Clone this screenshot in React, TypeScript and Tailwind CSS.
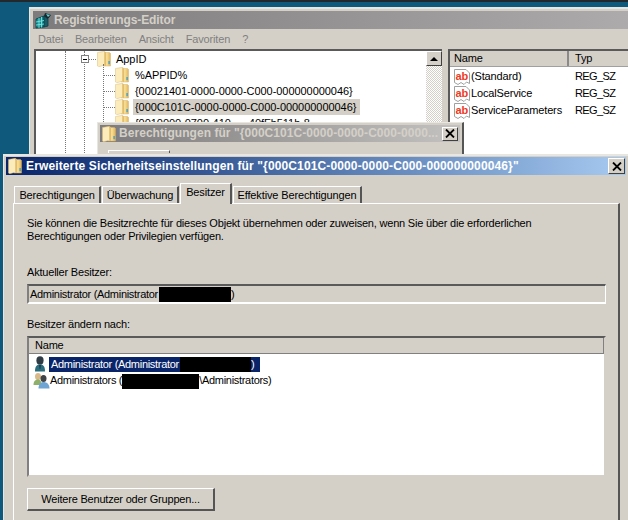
import React from "react";

const sans = "font-['Liberation_Sans',Arial,sans-serif]";
const titleFont = "font-['Liberation_Sans',Arial,sans-serif] font-bold text-[12px]";

function Folder({ className = "" }: { className?: string }) {
  return (
    <svg width="14" height="16" viewBox="0 0 14 16" className={"shrink-0 " + className}>
      <defs>
        <linearGradient id="fold" x1="0" y1="0" x2="1" y2="0">
          <stop offset="0" stopColor="#fbe7a8" />
          <stop offset="0.6" stopColor="#f5d88a" />
          <stop offset="1" stopColor="#dfb35c" />
        </linearGradient>
      </defs>
      <path d="M6 1.5 H12.5 L13.5 2.5 V15 H6 Z" fill="url(#fold)" stroke="#d8b36b" strokeWidth="0.5" />
      <path d="M0.5 1.5 L7.5 0.3 V14.2 L1.5 15.8 L0.5 15 Z" fill="#fcecbc" stroke="#dcbc78" strokeWidth="0.5" />
      <path d="M7.5 0.3 L9 1.2 V15 H7.5 Z" fill="#e4bd6c" />
      <rect x="11.4" y="10" width="1.4" height="3.2" fill="#3f9fc9" />
    </svg>
  );
}

function AbIcon() {
  return (
    <svg width="16" height="16" viewBox="0 0 16 16" className="shrink-0">
      <path
        d="M0.5 0.5 H12 L15.5 4 V14.5 L12.5 13 L10 15.5 L7 13.5 L4 15.5 L0.5 13.5 Z"
        fill="#fff"
        stroke="#a0a0a0"
        strokeWidth="1"
      />
      <text x="1.5" y="10.5" fontFamily="'Liberation Sans',sans-serif" fontWeight="700" fontSize="11" fill="#ee3a24">
        ab
      </text>
    </svg>
  );
}

function UserIcon() {
  return (
    <svg width="14" height="16" viewBox="0 0 14 16" className="shrink-0">
      <ellipse cx="7" cy="4.5" rx="3.6" ry="4.2" fill="#2f3c46" />
      <path d="M2 15.5 C2 10 4 8.5 7 8.5 C10 8.5 12 10 12 15.5 Z" fill="#2a6d7e" />
      <path d="M6 9 H8 L7.4 13 H6.6 Z" fill="#1d3c48" />
    </svg>
  );
}

function GroupIcon() {
  return (
    <svg width="17" height="17" viewBox="0 0 17 17" className="shrink-0">
      <ellipse cx="5" cy="4.5" rx="3" ry="3.6" fill="#d9b98a" />
      <path d="M0.5 13 C0.5 9 2.5 7.5 5 7.5 C7 7.5 8.5 9 8.5 13 Z" fill="#8fb06a" />
      <ellipse cx="10.5" cy="6.5" rx="3" ry="3.6" fill="#3f4448" />
      <path d="M5.5 16.5 C5.5 12 8 10 10.5 10 C13.5 10 16.5 12 16.5 16.5 Z" fill="#6fa5d2" />
    </svg>
  );
}

function RegIcon() {
  return (
    <svg width="17" height="17" viewBox="0 0 17 17" className="shrink-0">
      <path d="M1 7 L9 4 V15 L1 16 Z" fill="#0f8f93" stroke="#0a3c45" strokeWidth="0.8" />
      <path d="M9 4 L13 7 V14 L9 15 Z" fill="#1a5d68" stroke="#0a3c45" strokeWidth="0.8" />
      <path d="M1 10 L9 8.5 M1 13 L9 12 M4 6 V16 M6.5 5 V15.5" stroke="#7fe0dc" strokeWidth="0.9" />
      <path d="M10 1 L16 3 L13 7 L9 4 Z" fill="#15282e" />
      <path d="M11 2 L15 3 L13 5 Z" fill="#5fd5d3" />
    </svg>
  );
}

function CloseBtn({ className = "" }: { className?: string }) {
  return (
    <div
      className={
        "flex items-center justify-center bg-[#d4d0c8] border border-t-white border-l-white border-r-[#404040] border-b-[#404040] shrink-0 " +
        className
      }
    >
      <svg width="10" height="9" viewBox="0 0 10 9">
        <path d="M1 0.5 L9 8.5 M9 0.5 L1 8.5" stroke="#000" strokeWidth="1.8" />
      </svg>
    </div>
  );
}

function Tab({ label, active = false, w }: { label: string; active?: boolean; w: string }) {
  return (
    <div
      className={
        "flex items-center justify-center whitespace-nowrap bg-[#d4d0c8] border-t border-l border-r-2 border-t-white border-l-white border-r-[#555] " +
        w +
        (active ? " h-[21px] -mb-px z-10 relative pb-[3px] mr-px" : " h-[17px] mr-px")
      }
    >
      {label}
    </div>
  );
}

const treeRows = [
  { label: "%APPID%" },
  { label: "{00021401-0000-0000-C000-000000000046}" },
  { label: "{000C101C-0000-0000-C000-000000000046}", selected: true },
  { label: "{0010000-0700-410-----40fFb511b-8" },
];

const values = ["(Standard)", "LocalService", "ServiceParameters"];

function Redact({ w, className = "" }: { w: string; className?: string }) {
  return <span className={"inline-block h-[15px] bg-black align-middle " + w + " " + className} />;
}

export default function App() {
  return (
    <div className={"relative w-[628px] h-[520px] overflow-hidden bg-[#0f5a7c] text-[11px] tracking-[-0.2px] leading-[13px] text-black " + sans}>
      <div className="h-[2px] bg-[#22282b]" />

      {/* Registry editor */}
      <div className="absolute left-[29px] top-[7px] w-[640px] h-[200px] bg-[#d4d0c8] border-t-2 border-l border-[#e8e6e1] pl-[3px] pt-[2px] tracking-[-0.15px]">
        <div className="flex h-[18px] items-center bg-gradient-to-r from-[#7d7b7b] to-[#b0aeae] pl-[2px] gap-[2px]">
          <RegIcon />
          <span className={titleFont + " tracking-[-0.1px] text-[#d4d0c8]"}>Registrierungs-Editor</span>
        </div>
        <div className="flex h-[21px] items-center gap-[12px] pl-[5px] text-[#808080]">
          <span>Datei</span>
          <span>Bearbeiten</span>
          <span>Ansicht</span>
          <span>Favoriten</span>
          <span>?</span>
        </div>
        <div className="flex gap-[6px] pl-px">
          <div className="relative w-[408px] h-[130px] bg-white border-t-2 border-l-2 border-[#5a5a5a] shrink-0 -mt-px tracking-[-0.05px]">
            <span className="absolute left-[29px] top-0 h-full border-l border-dotted border-[#777]" />
            <span className="absolute left-[48px] top-0 h-full border-l border-dotted border-[#777]" />
            <span className="absolute left-[67px] top-[13px] h-full border-l border-dotted border-[#777]" />
            <div className="flex h-4 items-center pl-[45px]">
              <div className="flex h-[8px] w-[8px] items-center justify-center border border-[#808080] bg-white z-10">
                <span className="block h-px w-[4px] bg-black" />
              </div>
              <span className="w-[7px] border-t border-dotted border-[#777]" />
              <Folder className="ml-[1px]" />
              <span className="ml-[5px]">AppID</span>
            </div>
            {treeRows.map((r) => (
              <div key={r.label} className="flex h-4 items-center pl-[68px]">
                <span className="w-[11px] border-t border-dotted border-[#777]" />
                <Folder />
                <span
                  className={
                    "ml-[4px] pl-[2px] pr-[4px] h-4 flex items-center whitespace-nowrap " + (r.selected ? "bg-[#d4d0c8]" : "")
                  }
                >
                  {r.label}
                </span>
              </div>
            ))}
            <div className="absolute right-0 top-0 h-full w-[16px] bg-[repeating-conic-gradient(#d4d0c8_0_25%,#fff_0_50%)] bg-[length:2px_2px]">
              <div className="flex h-[15px] items-center justify-center bg-[#d4d0c8] border border-t-white border-l-white border-r-[#404040] border-b-[#404040]">
                <span className="block h-0 w-0 border-x-[4px] border-b-[4px] border-x-transparent border-b-black" />
              </div>
            </div>
          </div>
          <div className="w-[200px] h-[130px] bg-white border-t-2 border-l-2 border-[#5a5a5a] -mt-px">
            <div className="flex h-[16px] items-center bg-[#d4d0c8] border-b border-[#a0a0a0]">
              <span className="w-[119px] pl-[4px] border-r-2 border-[#8a8a8a] h-full flex items-center">Name</span>
              <span className="pl-[6px]">Typ</span>
            </div>
            <div className="flex flex-col pt-px">
              {values.map((v) => (
                <div key={v} className="flex h-[17px] items-center">
                  <div className="flex w-[119px] items-center pl-[4px] gap-px">
                    <AbIcon />
                    <span className="whitespace-nowrap">{v}</span>
                  </div>
                  <span className="pl-[6px] tracking-[-0.6px]">REG_SZ</span>
                </div>
              ))}
            </div>
          </div>
        </div>
      </div>

      {/* Permissions dialog */}
      <div className="absolute left-[97px] top-[122px] w-[367px] h-[60px] bg-[#d4d0c8] border-t border-l border-t-[#e8e6e1] border-l-[#e8e6e1] border-r-2 border-r-[#555] pl-[2px] pt-[2px] pr-[2px]">
        <div className="flex h-[17px] items-center bg-gradient-to-r from-[#7d7b7b] to-[#c4c2c0] pl-[2px] pr-[2px]">
          <Folder />
          <span className={"ml-[3px] flex-1 min-w-0 whitespace-nowrap overflow-hidden tracking-[0.05px] text-[#d4d0c8] " + titleFont}>
            Berechtigungen für "{"{"}000C101C-0000-0000-C000-0000...
          </span>
          <CloseBtn className="h-[14px] w-[16px]" />
        </div>
        <div className="ml-[8px] mt-[8px] w-[62px] h-[3px] border-t border-l border-r border-white border-r-[#555]" />
      </div>

      {/* Advanced security dialog */}
      <div className="absolute left-[3px] top-[154px] w-[625px] h-[380px] bg-[#d4d0c8] border-t-2 border-l border-[#e8e6e1] pl-[2px] pt-px pr-[2px]">
        <div className="flex h-[18px] items-center bg-gradient-to-r from-[#0a246a] to-[#a6caf0] pl-[2px] pr-[1px]">
          <Folder />
          <span className={"ml-[4px] flex-1 min-w-0 whitespace-nowrap tracking-[0.13px] text-white " + titleFont}>
            Erweiterte Sicherheitseinstellungen für "{"{"}000C101C-0000-0000-C000-000000000046{"}"}"
          </span>
          <CloseBtn className="h-[16px] w-[17px]" />
        </div>
        <div className="ml-[7px] w-[607px]">
          <div className="flex items-end h-[28px] pl-px tracking-[-0.13px]">
            <Tab label="Berechtigungen" w="w-[87px]" />
            <Tab label="Überwachung" w="w-[77px]" />
            <Tab label="Besitzer" active w="w-[52px]" />
            <Tab label="Effektive Berechtigungen" w="w-[129px]" />
          </div>
          <div className="h-[340px] border-t border-l border-r-2 border-t-white border-l-white border-r-[#555] pl-[13px] pt-[13px]">
            <p className="whitespace-nowrap">
              Sie können die Besitzrechte für dieses Objekt übernehmen oder zuweisen, wenn Sie über die erforderlichen
              <br />
              Berechtigungen oder Privilegien verfügen.
            </p>
            <p className="mt-[23px]">Aktueller Besitzer:</p>
            <div className="mt-[5px] flex h-[20px] w-[579px] items-center border-t-2 border-l-2 border-r border-b-2 border-t-[#5a5a5a] border-l-[#808080] border-r-white border-b-white pl-px whitespace-nowrap tracking-[-0.3px]">
              Administrator (Administrator
              <span className="inline-block h-[15px] w-[72px] bg-black ml-[1px]" />)
            </div>
            <p className="mt-[14px]">Besitzer ändern nach:</p>
            <div className="mt-[5px] h-[141px] w-[579px] border-t-2 border-l-2 border-r-2 border-b-2 border-t-[#5a5a5a] border-l-[#808080] border-r-[#d4d0c8] border-b-[#d4d0c8] bg-white">
              <div className="flex h-[16px] items-center bg-[#d4d0c8] border-b border-r border-[#808080] pl-[6px]">
                Name
              </div>
              <div className="flex flex-col pl-[4px] pt-[1px] tracking-[-0.3px]">
                <div className="flex h-[17px] items-center pt-px">
                  <UserIcon />
                  <span className="ml-[2px] flex h-[15px] items-center whitespace-nowrap bg-[#0a246a] pl-[2px] pr-[6px] text-white">
                    Administrator (Administrator
                    <Redact w="w-[71px]" className="ml-px" />)
                  </span>
                </div>
                <div className="flex h-[17px] items-center">
                  <GroupIcon />
                  <span className="whitespace-nowrap pt-px">
                    Administrators (
                    <Redact w="w-[77px]" />
                    \Administrators)
                  </span>
                </div>
              </div>
            </div>
            <div className="mt-[11px] flex h-[23px] w-[188px] items-center justify-center border border-t-white border-l-white border-r-2 border-b-2 border-r-[#555] border-b-[#555] bg-[#d4d0c8]">
              Weitere Benutzer oder Gruppen...
            </div>
          </div>
        </div>
      </div>
    </div>
  );
}
